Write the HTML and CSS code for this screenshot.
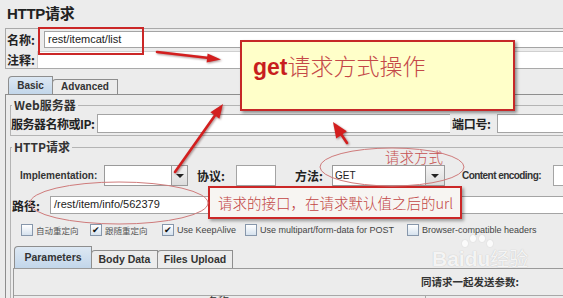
FILE: index.html
```html
<!DOCTYPE html>
<html lang="zh">
<head>
<meta charset="utf-8">
<title>HTTP请求</title>
<link rel="stylesheet" href="styles.css">
</head>
<body>
<div class="page">
  <div class="title">HTTP请求</div>

  <div class="namebox">
    <div class="nrow">
      <span class="lbl cn l-name">名称:</span>
      <div class="field txt">rest/itemcat/list</div>
    </div>
    <div class="nrow r2">
      <span class="lbl cn l-note">注释:</span>
      <div class="field flat"></div>
    </div>
  </div>

  <div class="tabs top">
    <div class="tab sel t-basic">Basic</div>
    <div class="tab t-adv">Advanced</div>
  </div>

  <div class="panel">
    <fieldset class="grp web">
      <legend>Web服务器</legend>
      <div class="row r-web">
        <span class="lbl cn l-server">服务器名称或IP:</span>
        <div class="field f-server"></div>
        <span class="lbl cn l-port">端口号:</span>
        <div class="field grow"></div>
      </div>
    </fieldset>

    <fieldset class="grp http">
      <legend>HTTP请求</legend>
      <div class="row r-impl">
        <span class="lbl en l-impl">Implementation:</span>
        <div class="combo c-impl"><div class="cfield"></div><div class="cbtn"><i></i></div></div>
        <span class="lbl cn l-proto">协议:</span>
        <div class="field f-proto"></div>
        <span class="lbl cn l-method">方法:</span>
        <div class="combo c-method"><div class="cfield">GET</div><div class="cbtn"><i></i></div></div>
        <span class="lbl en l-enc">Content encoding:</span>
        <div class="field grow"></div>
      </div>

      <div class="row r-path">
        <span class="lbl cn l-path">路径:</span>
        <div class="field txt grow">/rest/item/info/562379</div>
      </div>

      <div class="checks">
        <label class="chk"><span class="box"></span><span class="ct cnt">自动重定向</span></label>
        <label class="chk"><span class="box on">&#10004;</span><span class="ct cnt">跟随重定向</span></label>
        <label class="chk"><span class="box on">&#10004;</span><span class="ct">Use KeepAlive</span></label>
        <label class="chk"><span class="box"></span><span class="ct">Use multipart/form-data for POST</span></label>
        <label class="chk"><span class="box"></span><span class="ct">Browser-compatible headers</span></label>
      </div>

      <div class="tabs inner">
        <div class="tab sel t-params">Parameters</div>
        <div class="tab t-body">Body Data</div>
        <div class="tab t-files">Files Upload</div>
      </div>

      <div class="subpanel">
        <div class="sendrow">同请求一起发送参数:</div>
        <div class="thead">
          <div class="th th-name">名称:</div>
          <div class="th th-val"></div>
        </div>
      </div>
    </fieldset>
  </div>

  <!-- annotations drawn over the screenshot -->
  <div class="notes">
    <svg class="ink" width="563" height="298" viewBox="0 0 563 298">
      <ellipse cx="392" cy="167" rx="72" ry="19" class="oval"/>
      <ellipse cx="119" cy="203" rx="89" ry="21" class="oval"/>
      <g class="arrow">
        <line x1="157" y1="52" x2="209" y2="58"/>
        <polygon points="221,59.5 206.6,62.4 207.6,53.6"/>
        <line x1="175" y1="172" x2="216" y2="114"/>
        <polygon points="223,104 219.4,118.8 210.4,112.2"/>
        <line x1="347" y1="143" x2="341" y2="134"/>
        <polygon points="333,122 346.8,131.2 336.2,138.4"/>
      </g>
    </svg>
    <div class="redbox rb-name"></div>
    <div class="callout"><b>get</b><span>请求方式操作</span></div>
    <div class="redbox rb-url">请求的接口，在请求默认值之后的url</div>
    <div class="hint">请求方式</div>
    <div class="watermark">
      <span class="wm-bai">Bai</span><span class="wm-du">du</span><span class="wm-jy">经验</span>
      <span class="paw p1"></span><span class="paw p2"></span><span class="paw p3"></span><span class="paw p4"></span>
    </div>
  </div>
</div>
</body>
</html>
```

FILE: styles.css
```css
html, body {
  margin: 0;
  padding: 0;
  overflow: hidden;
  background: #ececec;
}

.page {
  position: relative;
  width: 563px;
  height: 298px;
  overflow: hidden;
  background: #ececec;
  font-family: "Liberation Sans", "Noto Sans CJK SC", sans-serif;
  font-size: 11px;
  color: #222;
}

.cn {
  font-family: "Noto Sans CJK SC", "Liberation Sans", sans-serif;
}

.title {
  height: 28px;
  line-height: 28px;
  padding-left: 7px;
  font-size: 15px;
  font-weight: bold;
  letter-spacing: -0.3px;
  color: #222;
}

/* name / comment box */
.namebox {
  margin-left: 5px;
  height: 41px;
  box-sizing: border-box;
  border: 1px solid #a9a9a9;
  border-right: none;
}

.nrow {
  display: flex;
  align-items: center;
  height: 17px;
  margin-top: 2px;
}

.nrow.r2 {
  margin-top: 3px;
}

.lbl {
  flex: none;
  font-weight: bold;
  font-size: 12px;
  white-space: nowrap;
  color: #222;
}

.lbl.en {
  font-family: "Liberation Sans", sans-serif;
  font-size: 10px;
  color: #333;
}

.l-name { width: 37px; padding-left: 1px; }
.l-note { width: 30px; padding-left: 1px; }

.field {
  flex: none;
  box-sizing: border-box;
  height: 100%;
  background: #fff;
  border: 1px solid #a4a4a4;
  border-right: none;
}

.field.txt, .namebox .field {
  flex: 1;
  padding-left: 3px;
  font-size: 11px;
  line-height: 15px;
  color: #222;
}

.field.flat {
  border-color: #d0d0d0;
  border-bottom: none;
}

.grow {
  flex: 1;
}

/* tabs */
.tabs {
  display: flex;
  align-items: flex-end;
}

.tabs.top {
  margin-top: 7px;
  padding-left: 8px;
  height: 18px;
}

.tab {
  box-sizing: border-box;
  border: 1px solid #8e8e8e;
  border-bottom: none;
  border-radius: 4px 0 0 0;
  background: #ececec;
  font-weight: bold;
  font-size: 10px;
  color: #333;
  text-align: center;
}

.tab + .tab {
  margin-left: -1px;
}

.tab.sel {
  background: linear-gradient(#dde8f3, #c2d6ea);
}

.t-basic { width: 45px; height: 18px; line-height: 17px; }
.t-adv { width: 66px; height: 15px; line-height: 14px; }

.panel {
  margin-left: 5px;
  border-top: 1px solid #8e8e8e;
  border-left: 1px solid #8e8e8e;
  padding-left: 4px;
  height: 203px;
}

/* groups */
.grp {
  margin: 0;
  padding: 0;
  border: 1px solid #b4b4b4;
  border-right: none;
  min-width: 0;
}

.grp legend {
  margin-left: 1px;
  padding: 0 2px;
  font-family: "Noto Sans CJK SC", "Liberation Sans", sans-serif;
  font-size: 12px;
  font-weight: bold;
  line-height: 16px;
  color: #333;
}

.web {
  margin-top: 2px;
  padding: 1px 0 2px 0;
}

.http {
  margin-top: 3px;
  padding: 10px 0 0 0;
  border-bottom: none;
}

.row {
  display: flex;
  align-items: center;
}

.r-web { height: 19px; }
.l-server { width: 86px; letter-spacing: -0.5px; }
.f-server { width: 353px; }
.l-port { width: 45px; margin-left: 2px; letter-spacing: -0.3px; }

.r-impl { height: 21px; padding-left: 9px; }
.l-impl { width: 84px; }

.combo {
  flex: none;
  display: flex;
  height: 100%;
  box-sizing: border-box;
  border: 1px solid #9a9a9a;
  background: #fff;
}

.cfield {
  flex: 1;
  padding-left: 2px;
  font-size: 10px;
  line-height: 19px;
  color: #222;
}

.cbtn {
  flex: none;
  width: 15px;
  border-left: 1px solid #9a9a9a;
  background: linear-gradient(#f4f4f4, #dcdcdc);
  display: flex;
  align-items: center;
  justify-content: center;
}

.cbtn i {
  width: 0;
  height: 0;
  border-left: 4px solid transparent;
  border-right: 4px solid transparent;
  border-top: 4px solid #222;
}

.c-impl { width: 84px; }
.c-method { width: 113px; }
.c-method .cbtn { width: 18px; }

.l-proto { width: 39px; margin-left: 9px; }
.f-proto { width: 40px; border-right: 1px solid #a4a4a4; }
.l-method { width: 37px; margin-left: 19px; }
.l-enc { width: 91px; margin-left: 17px; letter-spacing: -0.55px; }

.r-path { height: 18px; margin-top: 10px; padding-left: 1px; }
.l-path { width: 38px; }

/* checkboxes */
.checks {
  display: grid;
  grid-template-columns: 69px 72px 83px 162px auto;
  height: 12px;
  margin-top: 10px;
  padding-left: 10px;
}

.chk {
  display: flex;
  align-items: center;
  gap: 3px;
  white-space: nowrap;
}

.box {
  flex: none;
  width: 10px;
  height: 10px;
  border: 1px solid #8797ab;
  background: linear-gradient(#ffffff, #d6e2ee);
  font-size: 9px;
  line-height: 10px;
  text-align: center;
  color: #111;
}

.ct {
  font-size: 9px;
  color: #444;
}

.ct.cnt {
  font-family: "Noto Sans CJK SC", sans-serif;
  font-size: 8.5px;
  color: #555;
}

/* inner tabs */
.tabs.inner {
  height: 22px;
  margin-top: 10px;
  padding-left: 3px;
}

.tabs.inner .tab {
  font-size: 10.5px;
}

.t-params { width: 78px; height: 22px; line-height: 21px; }
.t-body { width: 67px; height: 18px; line-height: 17px; }
.t-files { width: 76px; height: 18px; line-height: 17px; }

.subpanel {
  margin-left: 2px;
  border-top: 1px solid #9a9a9a;
  border-left: 1px solid #9a9a9a;
  height: 29px;
}

.sendrow {
  height: 26px;
  line-height: 26px;
  padding-left: 407px;
  font-family: "Noto Sans CJK SC", sans-serif;
  font-size: 10.5px;
  font-weight: bold;
  color: #333;
}

.thead {
  display: flex;
  border-top: 1px solid #a8a8a8;
  height: 2px;
}

.th {
  font-family: "Noto Sans CJK SC", sans-serif;
  font-size: 11px;
  line-height: 18px;
  text-align: center;
  color: #333;
}

.th-name {
  width: 411px;
  border-right: 1px solid #a8a8a8;
  line-height: 10px;
  height: 2px;
  overflow: visible;
}

.th-val { flex: 1; }

/* ---------- annotations ---------- */
.notes {
  position: absolute;
  left: 0;
  top: 0;
  width: 563px;
  height: 298px;
  pointer-events: none;
}

.ink {
  position: absolute;
  left: 0;
  top: 0;
  z-index: 3;
  overflow: visible;
}

.oval {
  fill: none;
  stroke: #cf7b7b;
  stroke-width: 1;
}

.arrow line {
  stroke: #d31e1e;
  stroke-width: 2.6;
  stroke-linecap: round;
}

.arrow polygon {
  fill: #d31e1e;
}

.arrow {
  filter: drop-shadow(1px 1px 1px rgba(60, 0, 0, 0.45));
}

.redbox {
  position: absolute;
  box-sizing: border-box;
  border: 2px solid #cb2727;
}

.rb-name {
  left: 38px;
  top: 27px;
  width: 106px;
  height: 28px;
  z-index: 2;
}

.rb-url {
  left: 208px;
  top: 186px;
  width: 254px;
  height: 33px;
  padding-left: 8px;
  background: #f7f5f2;
  box-shadow: 2px 2px 3px rgba(0, 0, 0, 0.35);
  font-family: "Noto Sans CJK SC", sans-serif;
  font-weight: 300;
  font-size: 14.5px;
  line-height: 29px;
  color: #c24545;
  white-space: nowrap;
  z-index: 2;
}

.callout {
  position: absolute;
  left: 240px;
  top: 40px;
  width: 275px;
  height: 71px;
  box-sizing: border-box;
  padding: 8px 0 0 11px;
  background: #ffffc9;
  border: 2px solid #c62828;
  box-shadow: 2px 2px 3px rgba(0, 0, 0, 0.4);
  line-height: 30px;
  white-space: nowrap;
  z-index: 2;
}

.callout b {
  font-family: "Liberation Sans", sans-serif;
  font-size: 23px;
  font-weight: bold;
  color: #c81e1e;
}

.callout span {
  font-family: "Noto Sans CJK SC", sans-serif;
  font-weight: 300;
  font-size: 23px;
  color: #c44848;
}

.hint {
  position: absolute;
  left: 385px;
  top: 148px;
  font-family: "Noto Sans CJK SC", sans-serif;
  font-weight: 300;
  font-size: 14.5px;
  line-height: 18px;
  color: #c65252;
  z-index: 2;
}

.watermark {
  position: absolute;
  left: 432px;
  top: 244px;
  width: 110px;
  height: 26px;
  white-space: nowrap;
  color: rgba(255, 255, 255, 0.85);
  text-shadow: 0 0 1px rgba(120, 120, 120, 0.45);
  z-index: 1;
}

.wm-bai, .wm-du {
  font-family: "Liberation Sans", sans-serif;
  font-weight: bold;
  font-size: 21px;
}

.wm-jy {
  font-family: "Noto Sans CJK SC", sans-serif;
  font-size: 19px;
}

.paw {
  position: absolute;
  width: 6px;
  height: 7px;
  border-radius: 50%;
  background: rgba(255, 255, 255, 0.8);
  box-shadow: 0 0 1px rgba(120, 120, 120, 0.4);
}

.p1 { left: 30px; top: -4px; }
.p2 { left: 38px; top: -9px; }
.p3 { left: 47px; top: -9px; }
.p4 { left: 55px; top: -4px; }
```
